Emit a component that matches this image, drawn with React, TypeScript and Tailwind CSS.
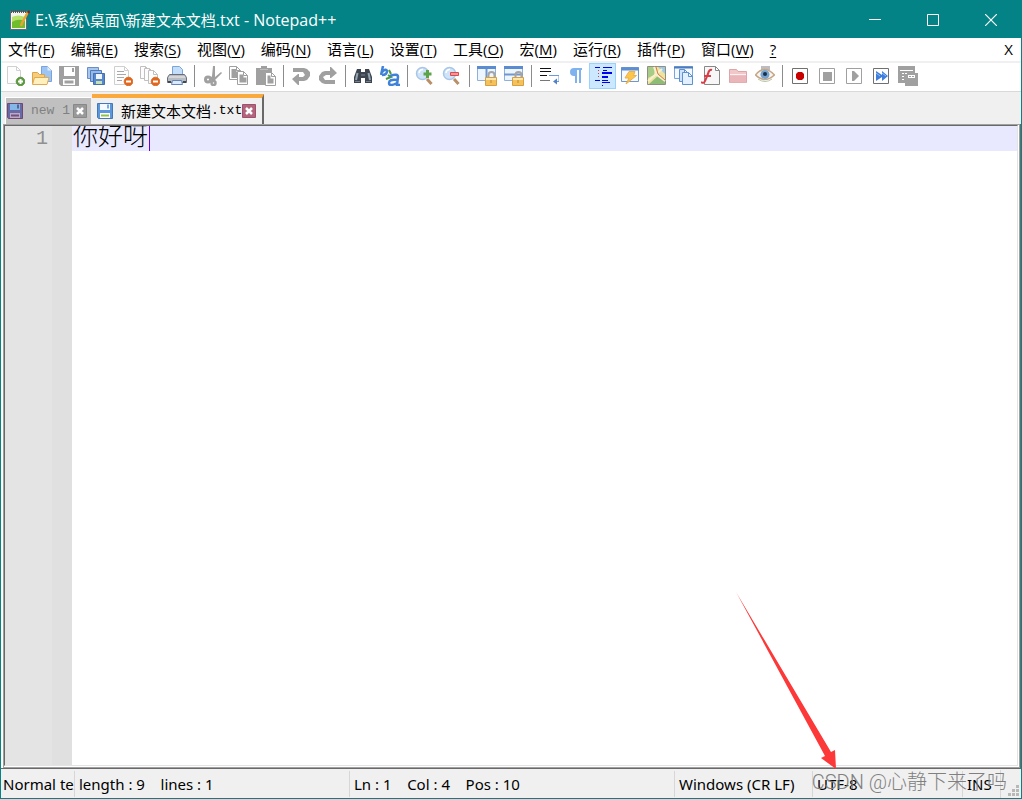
import { Fragment, useState } from 'react'
import type { ReactNode } from 'react'

interface Tool {
  label: string
  icon: ReactNode
  active?: boolean
}

const page = (x: number, y: number, w: number, h: number, stroke = '#b4b4b4', fill = '#fdfdfd') => (
  <path
    d={`M${x} ${y}h${w - 4}l4 4v${h - 4}h${-w}z M${x + w - 4} ${y}v4h4`}
    fill={fill}
    stroke={stroke}
  />
)

const minusBadge = (
  <>
    <circle cx="15.5" cy="15.5" r="4.3" fill="#e2661c" stroke="#d9702f" />
    <path d="M13 15.5h5" stroke="#fff" strokeWidth="2" />
  </>
)

const lock = (
  <>
    <path d="M11.500 12V9a3 3 0 0 1 6 0V12" fill="none" stroke="#a5a5a5" strokeWidth="2" />
    <path d="M8.500 11.500h11v8h-11z" fill="#f5c15a" stroke="#d6a040" />
    <path d="M9 13h10" stroke="#ffe7ab" strokeWidth="2" />
    <path d="M14 14v3" stroke="#b98a3a" />
  </>
)

const lens = (
  <>
    <path d="M12 13l4.500 5" stroke="#b98f68" strokeWidth="3" />
    <circle cx="7.500" cy="7.500" r="6" fill="#cfe4f8" stroke="#a9c6e8" strokeWidth="1.500" />
    <path d="M4 7a4 4 0 0 1 4-3.500" fill="none" stroke="#fff" strokeWidth="1.500" />
  </>
)

const frame = (stroke: string) => <path d="M2.500 2.500h15v15h-15z" fill="#fff" stroke={stroke} />

const groups: Tool[][] = [
  [
    {
      label: 'New',
      icon: (
        <>
          {page(2.5, 0.5, 13, 17, '#d0d0d0')}
          <circle cx="15.500" cy="15.500" r="4.300" fill="#5c9c3c" stroke="#5d9546" />
          <path d="M13 15.500h5M15.500 13v5" stroke="#fff" strokeWidth="2" />
        </>
      ),
    },
    {
      label: 'Open',
      icon: (
        <>
          <path d="M9.500 .5h6l4 4v11h-10z" fill="#9cc5f3" stroke="#79a3dc" />
          <path d="M15.500.5v4h4z" fill="#e0eefc" />
          <path d="M.5 17.500v-11h5l2 2h5v9z" fill="#f5ce7b" stroke="#dda24a" />
          <path d="M.5 18.500l2-7h14.500l-2 7z" fill="#fff0bd" stroke="#e0aa50" />
        </>
      ),
    },
    {
      label: 'Save',
      icon: (
        <>
          <path d="M0 0h20v20H2l-2-2z" fill="#a0a0a0" />
          <path d="M5 1h11v9H5z" fill="#fff" />
          <path d="M13 2h2v4h-2z" fill="#a0a0a0" />
          <path d="M4 13h12v6H4z" fill="#fff" />
          <path d="M5.500 14.500h9v3h-9z" fill="#a0a0a0" />
        </>
      ),
    },
    {
      label: 'Save All',
      icon: (
        <>
          <path d="M1.500 1.500h11v11h-11z" fill="#a9c7ee" stroke="#688dc9" />
          <path d="M4.500 4.500h11v11h-11z" fill="#94b8e7" stroke="#5279b8" />
          <path d="M7.500 7.500h11v11h-11z" fill="#5788cc" stroke="#456fae" />
          <path d="M10 8h6v5h-6z" fill="#eef5ff" />
          <path d="M10 15h6v3h-6z" fill="#c5e0b4" />
        </>
      ),
    },
    {
      label: 'Close',
      icon: (
        <>
          {page(1.5, 0.5, 14, 18, '#cfcfcf')}
          <path d="M4 5.500h7M4 8.500h9M4 11.500h7M4 14.500h5" stroke="#a8a8a8" />
          {minusBadge}
        </>
      ),
    },
    {
      label: 'Close All',
      icon: (
        <>
          {page(0.5, 0.5, 9, 12, '#c0c0c0')}
          {page(4.5, 2.5, 9, 12, '#c0c0c0')}
          {page(8.5, 4.5, 9, 13, '#c0c0c0')}
          {minusBadge}
        </>
      ),
    },
    {
      label: 'Print',
      icon: (
        <>
          <path d="M5.500 10V.5h7l3 3V10z" fill="#c4defa" stroke="#77a5dc" />
          <path d="M2.500 8.500h15l2 3v5h-19v-5z" fill="#b8bcc3" stroke="#696f78" />
          <path d="M2 11h16" stroke="#f0f0f0" />
          <path d="M5.500 14.500h9l1 4h-11z" fill="#dceaff" stroke="#6385b5" />
          <path d="M1 16h3M16 16h3" stroke="#414852" strokeWidth="2" />
        </>
      ),
    },
  ],
  [
    {
      label: 'Cut',
      icon: (
        <>
          <path d="M11 0h2v11l6-5 1 1-9 9-3-3 2-3z" fill="#a0a0a0" />
          <circle cx="6" cy="13.500" r="2.500" fill="none" stroke="#a0a0a0" strokeWidth="3" />
          <circle cx="11.500" cy="17" r="2" fill="none" stroke="#a0a0a0" strokeWidth="2.500" />
        </>
      ),
    },
    {
      label: 'Copy',
      icon: (
        <>
          {page(0.5, 0.5, 11, 13, '#a0a0a0', '#fff')}
          <path d="M2.500 3h5v3h2v6h-7z" fill="#a0a0a0" />
          {page(8.5, 5.5, 10, 13, '#a0a0a0', '#fff')}
          <path d="M10.500 8.500h4v3h3v5h-7z" fill="#a0a0a0" />
        </>
      ),
    },
    {
      label: 'Paste',
      icon: (
        <>
          <path d="M0 2h5V0h6v2h5v17H0z" fill="#a0a0a0" />
          <path d="M4 3.500h8" stroke="#bdbdbd" />
          {page(9.5, 6.5, 10, 13, '#a0a0a0', '#fff')}
          <path d="M11.500 9.500h3v3h3v5h-6z" fill="#a0a0a0" />
        </>
      ),
    },
  ],
  [
    {
      label: 'Undo',
      icon: (
        <>
          <path d="M2 2h11l3 1 3 3v4l-3 4-3 1H8v4H7l-6-6 6-5h1v3h4l2-2-2-3H2z" fill="#a0a0a0" />
        </>
      ),
    },
    {
      label: 'Redo',
      icon: (
        <>
          <path d="M17 18H7l-3-1-3-3v-4l3-4 3-1h5V1h1l6 6-6 5h-1V9H8l-3 2 2 3h10z" fill="#a0a0a0" />
        </>
      ),
    },
  ],
  [
    {
      label: 'Find',
      icon: (
        <>
          <path d="M4 3h4v3h4V3h4l3 8v6h-7v-5H8v5H1v-6z" fill="#3d4650" />
          <path d="M4.500 7L3 14M15.500 7l1.500 7" stroke="#96a5b3" strokeWidth="2" />
          <path d="M2 15.500h5M13 15.500h5M8 9h4" stroke="#75828e" />
        </>
      ),
    },
    {
      label: 'Replace',
      icon: (
        <>
          <path d="M3 0L1 9M2 6q4-4 5-1 0 4-5 4" fill="none" stroke="#3f82d8" strokeWidth="2.500" />
          <path d="M9 4l2 4M6 13l5-2-3-2" fill="none" stroke="#4b9a41" strokeWidth="2" />
          <path
            d="M10 10q8-3 8 1l-1 8h3M17 14q-8-1-8 3t8 0"
            fill="none"
            stroke="#3f82d8"
            strokeWidth="2.500"
          />
        </>
      ),
    },
  ],
  [
    {
      label: 'Zoom In',
      icon: (
        <>
          {lens}
          <path d="M12.500 4v8M8.500 8h8" stroke="#5da34a" strokeWidth="3" />
        </>
      ),
    },
    {
      label: 'Zoom Out',
      icon: (
        <>
          {lens}
          <path d="M8.500 6.500h8v3h-8z" fill="#f59a9a" stroke="#e0474f" />
        </>
      ),
    },
  ],
  [
    {
      label: 'Synchronize Vertical Scrolling',
      icon: (
        <>
          <path d="M.5.500h18v14H.5z" fill="#edf5ff" stroke="#8fb0dc" />
          <path d="M0 1.500h19" stroke="#5b8bd0" strokeWidth="3" />
          <path d="M9.500 3v12" stroke="#7098ce" strokeWidth="2" />
          {lock}
        </>
      ),
    },
    {
      label: 'Synchronize Horizontal Scrolling',
      icon: (
        <>
          <path d="M.5.500h18v14H.5z" fill="#edf5ff" stroke="#8fb0dc" />
          <path d="M0 1.500h19" stroke="#5b8bd0" strokeWidth="3" />
          <path d="M0 8.500h19" stroke="#7098ce" strokeWidth="2" />
          {lock}
        </>
      ),
    },
  ],
  [
    {
      label: 'Word Wrap',
      icon: (
        <>
          <path d="M1 2.500h11M1 5.500h11M1 9.500h7" stroke="#111" />
          <path d="M1 14.500h10" stroke="#777" />
          <path d="M10 9.500h10v6H15" fill="none" stroke="#6d9bd8" />
          <path d="M14 15.500l4-3v6z" fill="#4f82c9" />
        </>
      ),
    },
    {
      label: 'Show All Characters',
      icon: <path d="M16 2H8a4 4 0 0 0 0 8h1v7h2V4h2v13h2V4h1z" fill="#7fb3ee" />,
    },
    {
      label: 'Show Indent Guide',
      active: true,
      icon: (
        <>
          <path
            d="M2 1.500h5M10 1.500h9M10 4.500h4M2 14.500h5M9 14.500h6M9 16.500h8M9 19.500h1"
            stroke="#0000ef"
          />
          <path d="M9 7h10M9 11h6" stroke="#0000ef" strokeWidth="2" />
          <path d="M5.500 4v9" stroke="#e33" strokeDasharray="1 2" />
        </>
      ),
    },
    {
      label: 'User Defined Language',
      icon: (
        <>
          <path d="M1.500 1.500h17v14h-17z" fill="#f5faff" stroke="#7197c7" />
          <path d="M1 3h18" stroke="#5c8ed4" strokeWidth="3" />
          <path d="M9 5.500h6l-1.500 4h3L6 18l3-6H5z" fill="#fbc64b" stroke="#eab04a" />
        </>
      ),
    },
    {
      label: 'Document Map',
      icon: (
        <>
          <path d="M.5.500h18v18H.5z" fill="#eee4a0" stroke="#8f9082" />
          <path d="M1 1h7l-1 8-6 3z" fill="#a7cc87" />
          <path d="M11 1h7v7z" fill="#9cc9e8" />
          <path d="M2 18L12 9l6 7v2z" fill="#8ebc76" />
          <path d="M7 1l3 8 8 6M1 15l14-12" fill="none" stroke="#f8f0d0" strokeWidth="2" />
          <path d="M9 1l2 7 7 6" fill="none" stroke="#d97844" />
        </>
      ),
    },
    {
      label: 'Document List',
      icon: (
        <>
          <path d="M.5.500h18v12H.5z" fill="#f4f9ff" stroke="#78a5dd" />
          <path d="M0 1.500h19" stroke="#4c7cbd" strokeWidth="2" />
          {page(5.5, 3.5, 9, 12, '#5f91cf', '#cfe3fa')}
          {page(8.5, 6.5, 10, 12, '#5f91cf', '#e3f0ff')}
        </>
      ),
    },
    {
      label: 'Function List',
      icon: (
        <>
          {page(3.5, 0.5, 15, 18, '#888', '#f7f7f7')}
          <path d="M11 4q-3-1-4 4l-3 7q-1 3-4 1M3 10h7" fill="none" stroke="#dc3a45" strokeWidth="2" />
        </>
      ),
    },
    {
      label: 'Folder as Workspace',
      icon: (
        <>
          <path d="M1.500 16.500v-13h7l1.500 2h8.500v11z" fill="#f2c7c9" stroke="#dea4a7" />
          <path d="M2 9.500h16v7H2z" fill="#ebb6b9" />
          <path d="M2 8.500h16" stroke="#fff1f1" />
        </>
      ),
    },
    {
      label: 'Monitoring',
      icon: (
        <>
          <path d="M6 0h9v4H6z" fill="#bdbdbd" />
          <path d="M.5 9q9-11 19 0-10 9-19 0z" fill="#f7f5ef" stroke="#c6a584" strokeWidth="1.500" />
          <circle cx="10" cy="8.500" r="4.500" fill="#75a2cf" />
          <circle cx="10" cy="8" r="2" fill="#17304a" />
          <path d="M3 13q7 5 14 0" fill="none" stroke="#b8c4a3" />
        </>
      ),
    },
  ],
  [
    {
      label: 'Start Recording',
      icon: (
        <>
          {frame('#707070')}
          <path d="M8 6h4l2 2v4l-2 2H8l-2-2V8z" fill="#c90000" />
        </>
      ),
    },
    {
      label: 'Stop Recording',
      icon: (
        <>
          {frame('#a0a0a0')}
          <path d="M6 6h9v9H6z" fill="#a0a0a0" />
        </>
      ),
    },
    {
      label: 'Playback',
      icon: (
        <>
          {frame('#a0a0a0')}
          <path d="M8 5h2l5 5-5 5H8z" fill="#a0a0a0" />
        </>
      ),
    },
    {
      label: 'Run a Macro Multiple Times',
      icon: (
        <>
          {frame('#707070')}
          <path d="M5 5l6 4V5l6 5-6 5v-4l-6 4z" fill="#3f7edc" />
          <path d="M5 7l4 3M11 7l4 3" stroke="#98c1f5" />
        </>
      ),
    },
    {
      label: 'Save Recorded Macro',
      icon: (
        <>
          <path d="M0 0h17v7h3v13H7v-3H0z" fill="#a0a0a0" />
          <path d="M2 4.500h13" stroke="#fff" />
          <path d="M4 7.500h6M4 10.500h3M4 13.500h3" stroke="#fff" strokeDasharray="2 1" />
          <path d="M10 9h7v3h-7z" fill="#fff" />
          <path d="M11 10.500h5" stroke="#a0a0a0" strokeDasharray="2 1" />
        </>
      ),
    },
  ],
]

const menus = [
  ['文件', 'F'],
  ['编辑', 'E'],
  ['搜索', 'S'],
  ['视图', 'V'],
  ['编码', 'N'],
  ['语言', 'L'],
  ['设置', 'T'],
  ['工具', 'O'],
  ['宏', 'M'],
  ['运行', 'R'],
  ['插件', 'P'],
  ['窗口', 'W'],
]

function DiskIcon({ dim }: { dim?: boolean }) {
  return (
    <svg viewBox="0 0 16 16" className="size-4 shrink-0">
      <path d="M.5.500h15v15h-14l-1-1z" fill={dim ? '#686aa6' : '#5c97dc'} stroke={dim ? '#704875' : '#4478b8'} />
      <path d="M3 1h10v6H3z" fill={dim ? '#83b8e8' : '#f4faff'} />
      <path d="M10 1.500h2v4h-2z" fill={dim ? '#616091' : '#72aee8'} />
      <path d="M3 10h10v5H3z" fill={dim ? '#c0a8c5' : '#fff'} />
      <path d="M4 12.500h8" stroke={dim ? '#70527e' : '#8bc34a'} strokeWidth="2" />
    </svg>
  )
}

function CloseTab({ dim }: { dim?: boolean }) {
  return (
    <button aria-label="Close tab" className="size-[14px] shrink-0">
      <svg viewBox="0 0 14 14" className="size-[14px]">
        <path d="M.5.500h13v13H.5z" fill={dim ? '#999' : '#b1647c'} stroke={dim ? '#888' : '#a0506c'} />
        <path d="M4 4l6 6M10 4l-6 6" stroke="#fff" strokeWidth="2.500" />
      </svg>
    </button>
  )
}

function TitleBar() {
  return (
    <header className="flex h-[37px] shrink-0 items-center bg-[#048387] pl-2 pr-px text-white">
      <svg viewBox="0 0 22 22" className="size-[22px] shrink-0">
        <path d="M1.500 2.500h16v18h-16z" fill="#f4f4ee" stroke="#667" />
        <path d="M3 8q6-3 13 0v11H3z" fill="#b6e26a" />
        <path d="M3 13q6-4 13-1v7H3z" fill="#70be2b" />
        <path d="M2 2.500h15" stroke="#555" strokeWidth="3" strokeDasharray="1 1" />
        <path d="M19 3l-6 11-1 3" fill="none" stroke="#e7a336" strokeWidth="2.500" />
        <path d="M18 3l2-2 1 2-1 2z" fill="#8d1c22" />
      </svg>
      <h1 className="ml-1 flex-1 truncate text-[15px]">
        <span className="text-[16px]">E:\</span>系统<span className="text-[16px]">\</span>桌面
        <span className="text-[16px]">\</span>新建文本文档
        <span className="text-[16px]">.txt - Notepad++</span>
      </h1>
      <button aria-label="Minimize" className="flex h-full w-[58px] items-center justify-center">
        <svg viewBox="0 0 12 12" className="size-3">
          <path d="M0 5.500h12" stroke="#fff" />
        </svg>
      </button>
      <button aria-label="Maximize" className="flex h-full w-[58px] items-center justify-center">
        <svg viewBox="0 0 12 12" className="size-3">
          <path d="M.5.500h11v11H.5z" fill="none" stroke="#fff" />
        </svg>
      </button>
      <button aria-label="Close" className="flex h-full w-[58px] items-center justify-center">
        <svg viewBox="0 0 12 12" className="size-3">
          <path d="M0 0l12 12M12 0L0 12" stroke="#fff" strokeWidth="1.200" />
        </svg>
      </button>
    </header>
  )
}

function Toolbar() {
  return (
    <div role="toolbar" className="flex h-[29px] shrink-0 items-center overflow-hidden border-b border-[#d9d9d9] pb-0.5">
      {groups.map((group, i) => (
        <Fragment key={i}>
          {i > 0 && <div className="ml-1 mr-[3px] h-[22px] w-px shrink-0 bg-[#8c8c8c]" />}
          {group.map((tool) => (
            <button
              key={tool.label}
              aria-label={tool.label}
              className={`flex h-[26px] w-[27px] shrink-0 items-center justify-center ${
                tool.active ? 'border border-[#99d1ff] bg-[#cce8ff]' : ''
              }`}
            >
              <svg viewBox="0 0 20 20" className="size-5 shrink-0">
                {tool.icon}
              </svg>
            </button>
          ))}
        </Fragment>
      ))}
    </div>
  )
}

function Tabs() {
  return (
    <div className="flex h-8 shrink-0 items-end bg-[#f0f0f0] pl-1">
      <div className="flex h-[27px] w-[86px] items-center border-l border-t border-white bg-[#c0c0c0] pl-px">
        <DiskIcon dim />
        <button className="ml-2 flex-1 whitespace-nowrap text-left font-['Liberation_Mono',monospace] text-[13px] text-[#808080]">
          new 1
        </button>
        <CloseTab dim />
        <span className="w-1" />
      </div>
      <div className="ml-px flex h-[30px] items-center border-r-2 border-t-4 border-r-[#696969] border-t-[#faaa3c] pl-[5px] pr-1.5">
        <DiskIcon />
        <button className="ml-2 flex items-center whitespace-nowrap">
          <span className="text-[15px]">新建文本文档</span>
          <span className="font-['Liberation_Mono',monospace] text-[13px]">.txt</span>
        </button>
        <CloseTab />
      </div>
    </div>
  )
}

function Editor() {
  const [text, setText] = useState('你好呀')

  return (
    <div className="flex min-h-0 flex-1 border-b border-r border-[#696969] bg-white pl-0.5">
      <div className="flex flex-1 border border-[#a0a0a0]">
        <div className="flex flex-1 border-b border-r border-white">
          <div className="flex flex-1 border border-b-[#e3e3e3] border-l-[#696969] border-r-[#e3e3e3] border-t-[#696969]">
            <div className="w-[47px] bg-[#e4e4e4] pr-1 text-right font-['Liberation_Mono',monospace] text-[20px] leading-[25px] text-[#909090]">
              1
            </div>
            <div className="w-5 bg-[#e0e0e0]" />
            <div className="relative flex flex-1">
              <textarea
                aria-label="Document"
                spellCheck={false}
                value={text}
                onChange={(e) => setText(e.target.value)}
                className="flex-1 resize-none bg-[linear-gradient(#e8e8ff_25px,#ffffff_25px)] pl-px font-['Liberation_Mono','Noto_Sans_CJK_SC',monospace] text-[25px] leading-[25px] font-light outline-none"
              />
              <span className="absolute left-[77px] top-0 h-[25px] w-px bg-[#6a00e0]" />
            </div>
          </div>
        </div>
      </div>
    </div>
  )
}

function StatusBar() {
  return (
    <footer className="relative flex h-[29px] shrink-0 items-center whitespace-pre bg-[#f0f0f0] pt-px font-['Noto_Sans','Noto_Sans_CJK_SC',sans-serif] text-[15px]">
      <div className="w-[73px] shrink-0 overflow-hidden pl-0.5">Normal text file</div>
      <div className="flex h-[26px] w-[275px] shrink-0 items-center border-l border-[#d7d7d7] pl-1">
        length : 9    lines : 1
      </div>
      <div className="flex h-[26px] flex-1 items-center border-l border-[#d7d7d7] pl-1">
        Ln : 1    Col : 4    Pos : 10
      </div>
      <div className="flex h-[26px] w-[138px] shrink-0 items-center border-l border-[#d7d7d7] pl-1">
        Windows (CR LF)
      </div>
      <div className="flex h-[26px] w-[150px] shrink-0 items-center border-l border-[#d7d7d7] pl-1">UTF-8</div>
      <div className="flex h-[26px] w-[38px] shrink-0 items-center border-l border-[#d7d7d7] pl-1">INS</div>
      <div className="flex h-full w-[21px] shrink-0 items-end justify-end border-l border-[#d7d7d7] pb-0.5 pr-0.5">
        <svg viewBox="0 0 11 11" className="size-[11px]">
          <path
            d="M8 0h3v3H8zM4 4h3v3H4zM8 4h3v3H8zM0 8h3v3H0zM4 8h3v3H4zM8 8h3v3H8z"
            fill="#b8b8b8"
          />
        </svg>
      </div>
      <span className="absolute bottom-1 right-3.5 font-['Roboto','Noto_Sans_CJK_SC',sans-serif] text-[20px] leading-6 font-light text-[#808080]">
        CSDN @心静下来了吗
      </span>
      <svg viewBox="0 0 101 177" className="absolute bottom-[29px] right-[184px] h-[177px] w-[101px]">
        <path d="M0 0L95 160l4-2 1 19-15-11 4-2z" fill="#fc3838" />
      </svg>
    </footer>
  )
}

export default function App() {
  return (
    <div className="flex h-screen flex-col overflow-hidden border border-[#048387] bg-white font-['Open_Sans','Noto_Sans_CJK_SC',sans-serif] text-black">
      <TitleBar />
      <nav className="flex h-[25px] shrink-0 items-center gap-4 whitespace-nowrap border-b-2 border-[#f0f0f0] pl-[7px] pr-2 text-[15px]">
        {menus.map(([name, key]) => (
          <button key={key}>
            {name}(<u className="underline-offset-2">{key}</u>)
          </button>
        ))}
        <button>
          <u className="underline-offset-2">?</u>
        </button>
        <button aria-label="Close document" className="ml-auto">
          X
        </button>
      </nav>
      <Toolbar />
      <Tabs />
      <Editor />
      <StatusBar />
    </div>
  )
}
